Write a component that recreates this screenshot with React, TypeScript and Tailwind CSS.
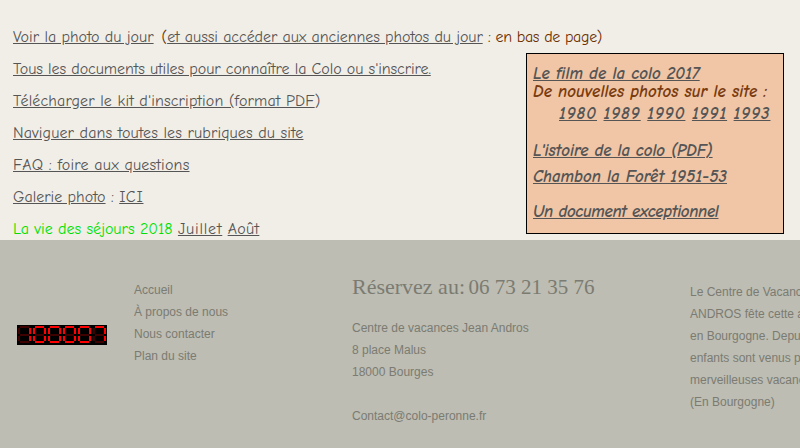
const comic = "font-['Comic_Sans_MS','Comic_Neue','Noto_Sans',sans-serif]";

const LINK = "text-[#555555] underline";

// 7-segment layout inside a 15x20 cell: top, upper-left, upper-right, middle, lower-left, lower-right, bottom
const segments = [
  { x: 3, y: 1, w: 9, h: 2 },
  { x: 1, y: 3, w: 2, h: 6 },
  { x: 12, y: 3, w: 2, h: 6 },
  { x: 3, y: 9, w: 9, h: 2 },
  { x: 1, y: 11, w: 2, h: 5 },
  { x: 12, y: 11, w: 2, h: 5 },
  { x: 3, y: 16, w: 9, h: 2 },
];

const digitOn: Record<string, number[]> = {
  "0": [0, 1, 2, 4, 5, 6],
  "1": [2, 5],
  "7": [0, 2, 5],
};

function Counter({ value }: { value: string }) {
  return (
    <svg width="90" height="20" viewBox="0 0 90 20" className="block bg-black">
      {value.split("").map((d, i) =>
        segments.map((s, j) => (
          <rect
            key={`${i}-${j}`}
            x={s.x + i * 15}
            y={s.y}
            width={s.w}
            height={s.h}
            fill={digitOn[d].includes(j) ? "#ff0000" : "#3f0000"}
          />
        ))
      )}
    </svg>
  );
}

export default function App() {
  return (
    <div className="w-[800px] h-[448px] overflow-hidden font-['Liberation_Sans',sans-serif]">
      {/* Top section */}
      <div className={`h-[240px] bg-[#f1eee7] pl-[13px] pr-4 flex justify-between ${comic} text-[16px]`}>
        <div className="pt-[21px] leading-[32px] text-[#6b2f00] whitespace-nowrap w-[500px]">
          <p>
            <a className={LINK}>Voir la photo du jour</a>
            <span className="ml-[8px]">(</span>
            <a className={`${LINK} tracking-[-0.07px]`}>et aussi accéder aux anciennes photos du jour</a>{" "}
            <span className="tracking-[-0.35px]">: en bas de page)</span>
          </p>
          <p className="tracking-[-0.08px]">
            <a className={LINK}>Tous les documents utiles pour connaître la Colo ou s'inscrire.</a>
          </p>
          <p className="tracking-[0.14px]">
            <a className={LINK}>Télécharger le kit d'inscription (</a>
            <span className="text-[#555555]">f</span>
            <a className={LINK}>ormat PDF</a>
            <span className="text-[#555555]">)</span>
          </p>
          <p className="tracking-[0.12px]"><a className={LINK}>Naviguer dans toutes les rubriques du site</a></p>
          <p className="tracking-[0.2px]"><a className={LINK}>FAQ : foire aux questions</a></p>
          <p>
            <a className={LINK}>Galerie photo</a> <span className="text-[#555555]">:</span>{" "}
            <a className={`${LINK} tracking-[0.8px]`}>ICI</a>
          </p>
          <p className="text-[#00e000]">
            La vie des séjours 2018 <a className={`${LINK} tracking-[0.8px]`}>Juillet</a>{" "}
            <a className={`${LINK} tracking-[0.3px]`}>Août</a>
          </p>
        </div>

        {/* Encart */}
        <div className="mt-[53px] w-[258px] h-[181px] shrink-0 border border-black bg-[#f0c6a7] pl-[6px] pt-[9px] italic font-bold text-[17px] whitespace-nowrap">
          <p className="leading-[21px]"><a className={LINK}>Le film de la colo 2017</a></p>
          <p className="leading-[16px] text-[#7a3b0f]">De nouvelles photos sur le site :</p>
          <p className="mt-[2px] pl-[26px] leading-[24px] flex gap-[6.5px] tracking-[0.9px]">
            <a className={LINK}>1980</a>
            <a className={LINK}>1989</a>
            <a className={LINK}>1990</a>
            <a className={LINK}>1991</a>
            <a className={LINK}>1993</a>
          </p>
          <p className="mt-[13px] leading-[24px] tracking-[-0.1px]"><a className={LINK}>L'istoire de la colo (PDF)</a></p>
          <p className="mt-[2px] leading-[24px]"><a className={LINK}>Chambon la Forêt 1951-53</a></p>
          <p className="mt-[11px] leading-[24px] tracking-[-0.4px]"><a className={LINK}>Un document exceptionnel</a></p>
        </div>
      </div>

      {/* Footer */}
      <div className="h-[208px] bg-[#bdbdb3] text-[#7b7b72] text-[12px] leading-[22px] flex whitespace-nowrap">
        <div className="w-[134px] shrink-0 pl-[17px] pt-[85px]">
          <Counter value="100007" />
        </div>
        <div className="w-[218px] shrink-0 pt-[39px]">
          <p>Accueil</p>
          <p>À propos de nous</p>
          <p>Nous contacter</p>
          <p>Plan du site</p>
        </div>
        <div className="w-[338px] shrink-0 pt-[33px]">
          <h2 className="font-['Liberation_Serif',serif] text-[22px] leading-[28px] mb-[16px]">
            Réservez au: <span className="text-[21px] ml-[-2px]">06 73 21 35 76</span>
          </h2>
          <p>Centre de vacances Jean Andros</p>
          <p>8 place Malus</p>
          <p>18000 Bourges</p>
          <p className="mt-[22px]">Contact@colo-peronne.fr</p>
        </div>
        <div className="shrink-0 pt-[41px]">
          <p>Le Centre de Vacances</p>
          <p>ANDROS fête cette année</p>
          <p>en Bourgogne. Depuis</p>
          <p>enfants sont venus passer</p>
          <p>merveilleuses vacances</p>
          <p>(En Bourgogne)</p>
        </div>
      </div>
    </div>
  );
}
